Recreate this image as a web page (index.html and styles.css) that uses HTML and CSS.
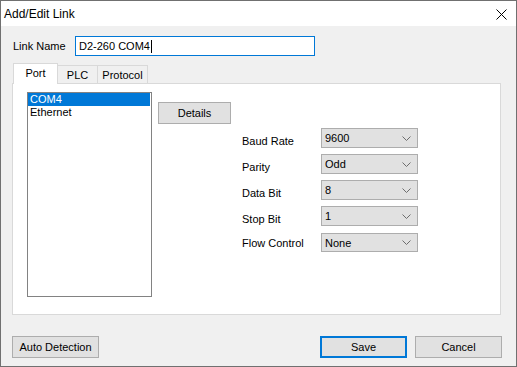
FILE: index.html
```html
<!DOCTYPE html>
<html lang="en">

<head>
    <meta charset="utf-8">
    <meta name="viewport" content="width=device-width, initial-scale=1.0">
    <title>Add/Edit Link</title>
    <link rel="stylesheet" href="styles.css">
</head>

<body>

    <div class="window">
        <div class="titlebar">
            <span class="title">Add/Edit Link</span>
            <svg class="close" width="11" height="11" viewBox="0 0 11 11">
                <path d="M0.5 0.5 L10.5 10.5 M10.5 0.5 L0.5 10.5" stroke="#000" stroke-width="1" fill="none" />
            </svg>
        </div>

        <div class="content">
            <div class="name-row">
                <label class="name-label">Link Name</label>
                <div class="textbox">D2-260 COM4<span class="caret"></span></div>
            </div>

            <div class="tabs">
                <div class="tab active">Port</div>
                <div class="tab">PLC</div>
                <div class="tab protocol">Protocol</div>
            </div>

            <div class="panel">
                <ul class="listbox">
                    <li class="selected">COM4</li>
                    <li>Ethernet</li>
                </ul>

                <div class="port-settings">
                    <button class="btn details">Details</button>

                    <div class="settings">
                        <label>Baud Rate</label>
                        <div class="combo">9600<svg width="9" height="5" viewBox="0 0 9 5"><path d="M0.5 0.5 L4.5 4.5 L8.5 0.5" stroke="#6d6d6d" fill="none" /></svg></div>
                        <label>Parity</label>
                        <div class="combo">Odd<svg width="9" height="5" viewBox="0 0 9 5"><path d="M0.5 0.5 L4.5 4.5 L8.5 0.5" stroke="#6d6d6d" fill="none" /></svg></div>
                        <label>Data Bit</label>
                        <div class="combo">8<svg width="9" height="5" viewBox="0 0 9 5"><path d="M0.5 0.5 L4.5 4.5 L8.5 0.5" stroke="#6d6d6d" fill="none" /></svg></div>
                        <label>Stop Bit</label>
                        <div class="combo">1<svg width="9" height="5" viewBox="0 0 9 5"><path d="M0.5 0.5 L4.5 4.5 L8.5 0.5" stroke="#6d6d6d" fill="none" /></svg></div>
                        <label class="last">Flow Control</label>
                        <div class="combo last">None<svg width="9" height="5" viewBox="0 0 9 5"><path d="M0.5 0.5 L4.5 4.5 L8.5 0.5" stroke="#6d6d6d" fill="none" /></svg></div>
                    </div>
                </div>
            </div>

            <div class="footer">
                <button class="btn">Auto Detection</button>
                <button class="btn save">Save</button>
                <button class="btn cancel">Cancel</button>
            </div>
        </div>
    </div>

</body>

</html>
```

FILE: styles.css
```css
* {
    box-sizing: border-box;
}

body {
    margin: 0;
    font-family: "Liberation Sans", Arial, sans-serif;
    font-size: 11px;
    color: #000;
}

.window {
    width: 517px;
    height: 367px;
    border: 1px solid #707070;
    background: #f0f0f0;
    display: flex;
    flex-direction: column;
}

.titlebar {
    height: 25px;
    background: #fff;
    display: flex;
    align-items: center;
    padding-left: 3px;
}

.title {
    font-size: 12px;
}

.close {
    margin-left: auto;
    margin-right: 9px;
    margin-top: 2px;
}

.content {
    padding: 0 14px 0 11px;
}

.name-row {
    display: flex;
    align-items: center;
    margin-top: 10px;
}

.name-label {
    width: 63px;
    padding-left: 1px;
}

.textbox {
    width: 240px;
    height: 20px;
    border: 1px solid #0078d7;
    background: #fff;
    padding-left: 3px;
    line-height: 18px;
    display: flex;
    align-items: center;
}

.caret {
    width: 1px;
    height: 13px;
    background: #000;
    margin-left: 1px;
}

.tabs {
    display: flex;
    align-items: flex-end;
    height: 20px;
    margin-top: 7px;
    padding-left: 1px;
}

.tab {
    height: 18px;
    width: 41px;
    border: 1px solid #d9d9d9;
    border-bottom: none;
    background: #f0f0f0;
    text-align: center;
    line-height: 18px;
    margin-left: -1px;
}

.tab.active {
    width: 45px;
    height: 21px;
    margin-left: 0;
    margin-bottom: -1px;
    background: #fff;
    position: relative;
    z-index: 2;
    line-height: 18px;
}

.tab.protocol {
    width: 51px;
}

.panel {
    width: 489px;
    height: 232px;
    border: 1px solid #d9d9d9;
    background: #fff;
    display: flex;
    align-items: flex-start;
}

.listbox {
    list-style: none;
    margin: 8px 0 0 14px;
    padding: 0;
    width: 125px;
    height: 205px;
    border: 1px solid #828282;
}

.listbox li {
    height: 13px;
    line-height: 13px;
    padding-left: 2px;
    margin-right: 1px;
}

.listbox .selected {
    background: #0078d7;
    color: #fff;
}

.port-settings {
    margin: 18px 0 0 6px;
}

.btn {
    font-family: inherit;
    font-size: 11px;
    color: #000;
    background: #e1e1e1;
    border: 1px solid #adadad;
    width: 87px;
    height: 22px;
    padding: 0;
    display: block;
}

.details {
    width: 73px;
}

.settings {
    display: grid;
    grid-template-columns: 79px 97px;
    grid-auto-rows: 20px;
    row-gap: 6px;
    margin: 4px 0 0 84px;
}

.settings label {
    padding-top: 7px;
    line-height: 13px;
}

.settings label.last {
    padding-top: 5px;
}

.combo {
    background: #e1e1e1;
    border: 1px solid #adadad;
    display: flex;
    align-items: center;
    justify-content: space-between;
    padding: 0 6px 0 3px;
}

.combo.last {
    margin-top: 1px;
}

.footer {
    display: flex;
    margin-top: 21px;
}

.save {
    margin-left: auto;
    border: 2px solid #0078d7;
}

.cancel {
    margin-left: 8px;
}
```
